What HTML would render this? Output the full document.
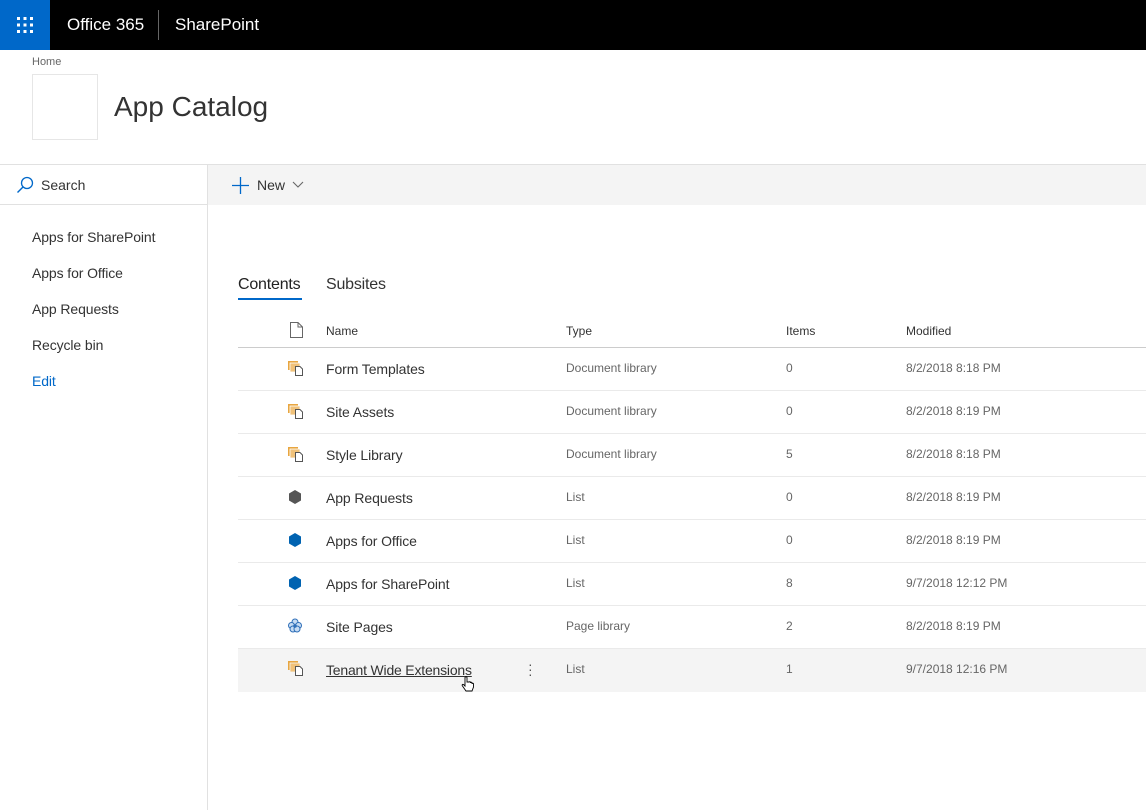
<!DOCTYPE html>
<html><head><meta charset="utf-8"><style>
*{margin:0;padding:0;box-sizing:border-box}
body{width:1146px;height:810px;overflow:hidden;background:#fff;font-family:"Segoe UI","Liberation Sans",sans-serif;color:#333;position:relative}
.a{position:absolute;white-space:nowrap}
.top{position:absolute;left:0;top:0;width:1146px;height:50px;background:#000}
.waf{position:absolute;left:0;top:0;width:50px;height:50px;background:#0068c9}
.row{position:absolute;left:238px;width:908px;height:43px;border-bottom:1px solid #eaeaea}
.nm{position:absolute;left:88px;top:13px;font-size:14px;color:#333;letter-spacing:-0.1px}
.ty,.it,.md{position:absolute;top:13px;font-size:12px;color:#666}
.ty{left:328px}.it{left:548px}.md{left:668px}
.ic{position:absolute;left:50px;top:12px}
.sb{font-size:14px;letter-spacing:-0.1px}
</style></head><body>
<div class="top"></div>
<div class="waf"><svg width="50" height="50">
<g fill="#fff">
<rect x="17" y="17" width="3" height="3"/><rect x="23.5" y="17" width="3" height="3"/><rect x="30" y="17" width="3" height="3"/>
<rect x="17" y="23.5" width="3" height="3"/><rect x="23.5" y="23.5" width="3" height="3"/><rect x="30" y="23.5" width="3" height="3"/>
<rect x="17" y="30" width="3" height="3"/><rect x="23.5" y="30" width="3" height="3"/><rect x="30" y="30" width="3" height="3"/>
</g></svg></div>
<div class="a" style="left:67px;top:15px;font-size:17px;color:#fff">Office 365</div>
<div class="a" style="left:158px;top:10px;width:1px;height:30px;background:#666"></div>
<div class="a" style="left:175px;top:15px;font-size:17px;color:#fff">SharePoint</div>
<div class="a" style="left:32px;top:56px;font-size:11px;color:#666">Home</div>
<div class="a" style="left:32px;top:74px;width:66px;height:66px;border:1px solid #e6e6e6"></div>
<div class="a" style="left:114px;top:91px;font-size:28px;color:#333">App Catalog</div>
<div class="a" style="left:0;top:164px;width:1146px;height:1px;background:#e1e1e1"></div>
<div class="a" style="left:207px;top:165px;width:939px;height:40px;background:#f4f4f4"></div>
<div class="a" style="left:207px;top:165px;width:1px;height:645px;background:#e1e1e1"></div>
<div class="a" style="left:0;top:204px;width:207px;height:1px;background:#e1e1e1"></div>
<svg class="a" style="left:16px;top:176px" width="18" height="18"><circle cx="11" cy="7" r="5.5" fill="none" stroke="#0068c9" stroke-width="1.3"/><line x1="7" y1="11" x2="1.5" y2="16.5" stroke="#0068c9" stroke-width="1.4"/></svg>
<div class="a" style="left:41px;top:177px;font-size:14px;color:#333">Search</div>
<svg class="a" style="left:232px;top:177px" width="17" height="17"><path d="M8.5 0V17M0 8.5H17" stroke="#0068c9" stroke-width="1.3" fill="none"/></svg>
<div class="a" style="left:257px;top:177px;font-size:14px;color:#333">New</div>
<svg class="a" style="left:292px;top:181px" width="12" height="8"><path d="M1 1L6 6L11 1" stroke="#666" fill="none" stroke-width="1.1"/></svg>
<div class="a sb" style="left:32px;top:229px">Apps for SharePoint</div>
<div class="a sb" style="left:32px;top:265px">Apps for Office</div>
<div class="a sb" style="left:32px;top:301px">App Requests</div>
<div class="a sb" style="left:32px;top:337px">Recycle bin</div>
<div class="a sb" style="left:32px;top:373px;color:#0068c9">Edit</div>
<div class="a" style="left:238px;top:276px;font-size:16px;color:#222;letter-spacing:-0.2px">Contents</div>
<div class="a" style="left:238px;top:298px;width:64px;height:2px;background:#0068c9"></div>
<div class="a" style="left:326px;top:276px;font-size:16px;color:#333;letter-spacing:-0.2px">Subsites</div>
<svg class="a" style="left:290px;top:322px" width="13" height="16"><path d="M0.5 0.5H8L12.5 5V15.5H0.5Z M8 0.5V5H12.5" fill="none" stroke="#666"/></svg>
<div class="a" style="left:326px;top:324px;font-size:12px;color:#333">Name</div>
<div class="a" style="left:566px;top:324px;font-size:12px;color:#333">Type</div>
<div class="a" style="left:786px;top:324px;font-size:12px;color:#333">Items</div>
<div class="a" style="left:906px;top:324px;font-size:12px;color:#333">Modified</div>
<div class="a" style="left:238px;top:347px;width:908px;height:1px;background:#ccc"></div>

<div class="row" style="top:348px"><svg class="ic" width="16" height="16"><rect x="0" y="1" width="10" height="9" fill="#e8a640"/><rect x="2" y="3" width="10" height="9" fill="#f1c27a" stroke="#fff" stroke-width=".8"/><path d="M7.5 6.5H12L14.5 9V15.5H7.5Z" fill="#fff" stroke="#555"/></svg><div class="nm">Form Templates</div><div class="ty">Document library</div><div class="it">0</div><div class="md">8/2/2018 8:18 PM</div></div>
<div class="row" style="top:391px"><svg class="ic" width="16" height="16"><rect x="0" y="1" width="10" height="9" fill="#e8a640"/><rect x="2" y="3" width="10" height="9" fill="#f1c27a" stroke="#fff" stroke-width=".8"/><path d="M7.5 6.5H12L14.5 9V15.5H7.5Z" fill="#fff" stroke="#555"/></svg><div class="nm">Site Assets</div><div class="ty">Document library</div><div class="it">0</div><div class="md">8/2/2018 8:19 PM</div></div>
<div class="row" style="top:434px"><svg class="ic" width="16" height="16"><rect x="0" y="1" width="10" height="9" fill="#e8a640"/><rect x="2" y="3" width="10" height="9" fill="#f1c27a" stroke="#fff" stroke-width=".8"/><path d="M7.5 6.5H12L14.5 9V15.5H7.5Z" fill="#fff" stroke="#555"/></svg><div class="nm">Style Library</div><div class="ty">Document library</div><div class="it">5</div><div class="md">8/2/2018 8:18 PM</div></div>
<div class="row" style="top:477px"><svg class="ic" width="16" height="16"><path d="M7 1L13 4.5V11.5L7 15L1 11.5V4.5Z" fill="#555"/></svg><div class="nm">App Requests</div><div class="ty">List</div><div class="it">0</div><div class="md">8/2/2018 8:19 PM</div></div>
<div class="row" style="top:520px"><svg class="ic" width="16" height="16"><path d="M7 1L13 4.5V11.5L7 15L1 11.5V4.5Z" fill="#0063b1"/></svg><div class="nm">Apps for Office</div><div class="ty">List</div><div class="it">0</div><div class="md">8/2/2018 8:19 PM</div></div>
<div class="row" style="top:563px"><svg class="ic" width="16" height="16"><path d="M7 1L13 4.5V11.5L7 15L1 11.5V4.5Z" fill="#0063b1"/></svg><div class="nm">Apps for SharePoint</div><div class="ty">List</div><div class="it">8</div><div class="md">9/7/2018 12:12 PM</div></div>
<div class="row" style="top:606px"><svg class="ic" width="16" height="16"><g fill="#c7dcf3" stroke="#2f6fb8" stroke-width="1"><circle cx="7" cy="4" r="3"/><circle cx="3.5" cy="7.5" r="3"/><circle cx="10.5" cy="7.5" r="3"/><circle cx="5" cy="11" r="3"/><circle cx="9" cy="11" r="3"/></g><circle cx="7" cy="8" r="1.8" fill="#2f6fb8"/></svg><div class="nm">Site Pages</div><div class="ty">Page library</div><div class="it">2</div><div class="md">8/2/2018 8:19 PM</div></div>
<div class="row" style="top:649px;background:#f4f4f4;border-bottom:none"><svg class="ic" width="16" height="16" style="top:11px"><rect x="0" y="1" width="10" height="9" fill="#e8a640"/><rect x="2" y="3" width="10" height="9" fill="#f1c27a" stroke="#f4f4f4" stroke-width=".8"/><path d="M7.5 6.5H12L14.5 9V15.5H7.5Z" fill="#fff" stroke="#555"/></svg><div class="nm" style="top:13px;text-decoration:underline;letter-spacing:-0.2px">Tenant Wide Extensions</div><div style="position:absolute;left:290px;top:13px;font-size:14px;color:#555;line-height:5px">·<br>·<br>·</div><div class="ty" style="top:13px">List</div><div class="it" style="top:13px">1</div><div class="md" style="top:13px">9/7/2018 12:16 PM</div></div>
<svg class="a" style="left:461px;top:676px" width="14" height="18"><path d="M4 1.5V10L2.5 8.5C1.5 8 0.5 9 1.5 10L5 15H11L12.5 11V8C12.5 7 11 7 11 8V7C11 6 9.5 6 9.5 7V6.5C9.5 5.5 8 5.5 8 6.5V6H6V1.5C6 0.5 4 0.5 4 1.5Z" fill="#fff" stroke="#000" stroke-width=".9"/></svg>
</body></html>
